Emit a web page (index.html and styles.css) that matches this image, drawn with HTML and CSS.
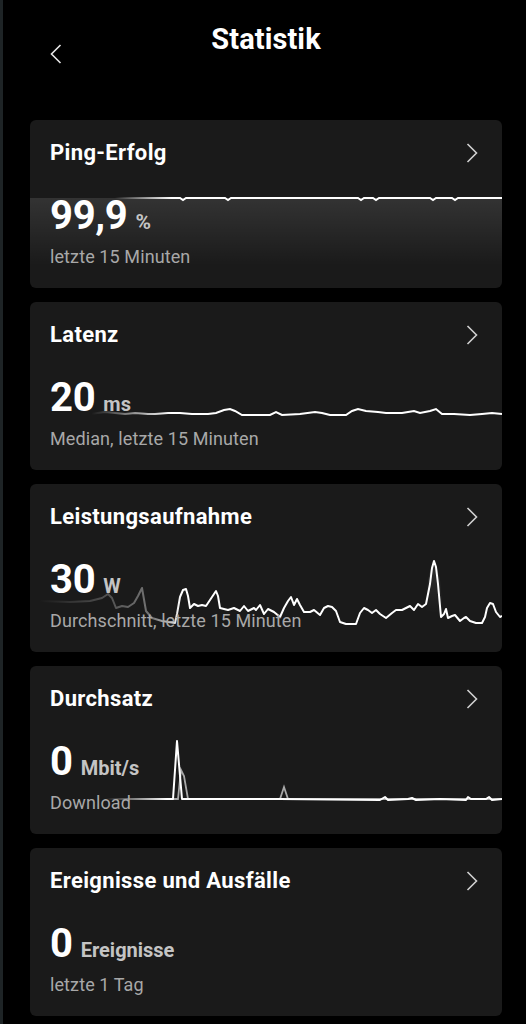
FILE: index.html
```html
<!DOCTYPE html>
<html lang="de">
<head>
<meta charset="utf-8">
<title>Statistik</title>
<link rel="stylesheet" href="styles.css">
</head>
<body>
<div class="screen">
  <header class="topbar">
    <button class="back" aria-label="Zurück">
      <svg width="12" height="20" viewBox="0 0 12 20"><polyline points="10.5,1 1.5,10 10.5,19" fill="none" stroke="#e6e6e6" stroke-width="1.6"/></svg>
    </button>
    <h1 class="title">Statistik</h1>
    <span class="spacer"></span>
  </header>

  <main class="cards">
    <!-- Ping -->
    <section class="card">
      <svg class="chart" viewBox="0 0 472 168" preserveAspectRatio="none">
        <defs>
          <linearGradient id="g1s" gradientUnits="userSpaceOnUse" x1="0" y1="0" x2="472" y2="0">
            <stop offset="0.18" stop-color="#fff" stop-opacity="0"/>
            <stop offset="0.30" stop-color="#fff" stop-opacity="1"/>
          </linearGradient>
          <linearGradient id="g1f" x1="0" y1="0" x2="0" y2="1">
            <stop offset="0" stop-color="#fff" stop-opacity="0.11"/>
            <stop offset="0.75" stop-color="#fff" stop-opacity="0"/>
          </linearGradient>
        </defs>
        <path d="M0,78 L472,78 L472,168 L0,168 Z" fill="url(#g1f)"/>
        <polyline fill="none" stroke="url(#g1s)" stroke-width="2" points="0,78 150,78 153,80 156,78 195,78 198,80 201,78 328,78 331,80 334,78 343,78 346,80 349,78 400,78 403,80 406,78 422,78 425,80 428,78 472,78"/>
      </svg>
      <div class="card-head">
        <h2>Ping-Erfolg</h2>
        <svg class="chev" width="12" height="20" viewBox="0 0 12 20"><polyline points="1.5,1 10.5,10 1.5,19" fill="none" stroke="#d0d0d0" stroke-width="1.6"/></svg>
      </div>
      <div class="value"><span class="num">99,9</span><span class="unit unit-pct">%</span></div>
      <p class="sub">letzte 15 Minuten</p>
    </section>

    <!-- Latenz -->
    <section class="card">
      <svg class="chart" viewBox="0 0 472 168" preserveAspectRatio="none">
        <defs>
          <linearGradient id="g2s" gradientUnits="userSpaceOnUse" x1="0" y1="0" x2="472" y2="0">
            <stop offset="0.13" stop-color="#fff" stop-opacity="0"/>
            <stop offset="0.30" stop-color="#fff" stop-opacity="1"/>
          </linearGradient>
        </defs>
        <polyline fill="none" stroke="url(#g2s)" stroke-width="2" points="60,112 75,110 95,112 105,111 118,112 125,112 138,111 150,111 162,112 178,112 186,111 194,108 200,107 205,109 212,113 228,113 240,113 246,110 252,113 270,112 285,110 292,111 300,113 316,113 322,109 328,107 336,109 348,110 356,111 372,111 378,110 384,109 390,111 400,109 406,107 412,112 424,112 440,113 452,112 462,111 472,112"/>
      </svg>
      <div class="card-head">
        <h2>Latenz</h2>
        <svg class="chev" width="12" height="20" viewBox="0 0 12 20"><polyline points="1.5,1 10.5,10 1.5,19" fill="none" stroke="#d0d0d0" stroke-width="1.6"/></svg>
      </div>
      <div class="value"><span class="num">20</span><span class="unit">ms</span></div>
      <p class="sub">Median, letzte 15 Minuten</p>
    </section>

    <!-- Leistungsaufnahme -->
    <section class="card">
      <svg class="chart" viewBox="0 0 472 168" preserveAspectRatio="none">
        <defs>
          <linearGradient id="g3s" gradientUnits="userSpaceOnUse" x1="0" y1="0" x2="472" y2="0">
            <stop offset="0.02" stop-color="#fff" stop-opacity="0"/>
            <stop offset="0.26" stop-color="#fff" stop-opacity="0.4"/>
            <stop offset="0.32" stop-color="#fff" stop-opacity="1"/>
          </linearGradient>
          <linearGradient id="g3f" x1="0" y1="0" x2="0" y2="1">
            <stop offset="0" stop-color="#fff" stop-opacity="0.10"/>
            <stop offset="1" stop-color="#fff" stop-opacity="0"/>
          </linearGradient>
        </defs>
        <path d="M396,126 L398,96 L401,84 L404,77 L407,84 L410,96 L413,130 Z" fill="url(#g3f)"/>
        <polyline fill="none" stroke="url(#g3s)" stroke-width="2" stroke-linejoin="round" points="10,117 40,118 60,117 72,114 78,110 82,114 86,124 92,122 98,123 104,119 108,112 112,104 116,127 122,134 132,137 145,139 147,130 150,113 153,106 156,105 158,112 160,124 164,120 168,122 172,121 176,122 180,116 184,110 186,107 188,112 190,124 198,126 204,124 210,127 214,122 218,127 224,124 226,126 230,121 234,130 238,125 244,128 250,133 254,124 258,117 261,113 264,121 267,115 270,121 274,128 280,128 284,126 290,131 294,124 298,122 302,123 306,127 310,138 316,140 326,140 330,129 334,124 338,126 342,129 346,126 350,130 356,134 362,129 366,126 372,126 376,124 380,122 384,126 388,120 392,123 396,120 400,100 402,84 404,77 406,83 408,100 411,133 414,130 416,125 418,134 422,132 425,131 430,137 434,134 436,133 440,137 446,139 452,139 455,133 457,124 460,119 463,120 466,128 470,133 472,132"/>
      </svg>
      <div class="card-head">
        <h2>Leistungsaufnahme</h2>
        <svg class="chev" width="12" height="20" viewBox="0 0 12 20"><polyline points="1.5,1 10.5,10 1.5,19" fill="none" stroke="#d0d0d0" stroke-width="1.6"/></svg>
      </div>
      <div class="value"><span class="num">30</span><span class="unit">W</span></div>
      <p class="sub">Durchschnitt, letzte 15 Minuten</p>
    </section>

    <!-- Durchsatz -->
    <section class="card">
      <svg class="chart" viewBox="0 0 472 168" preserveAspectRatio="none">
        <defs>
          <linearGradient id="g4s" gradientUnits="userSpaceOnUse" x1="0" y1="0" x2="472" y2="0">
            <stop offset="0.16" stop-color="#fff" stop-opacity="0"/>
            <stop offset="0.29" stop-color="#fff" stop-opacity="1"/>
          </linearGradient>
        </defs>
        <polyline fill="none" stroke="#a8a8a8" stroke-width="1.8" points="140,133 148,133 151,104 154,110 158,133 250,133 254,121 258,133 472,133"/>
        <polyline fill="none" stroke="url(#g4s)" stroke-width="2" stroke-linejoin="round" points="70,133 141,133 143,133 147,75 152,133 210,133 250,133 350,134 355,131 358,134 378,133 382,132 386,134 410,133 436,134 438,131 441,133 456,133 459,131 462,134 472,133"/>
      </svg>
      <div class="card-head">
        <h2>Durchsatz</h2>
        <svg class="chev" width="12" height="20" viewBox="0 0 12 20"><polyline points="1.5,1 10.5,10 1.5,19" fill="none" stroke="#d0d0d0" stroke-width="1.6"/></svg>
      </div>
      <div class="value"><span class="num">0</span><span class="unit">Mbit/s</span></div>
      <p class="sub">Download</p>
    </section>

    <!-- Ereignisse -->
    <section class="card">
      <div class="card-head">
        <h2>Ereignisse und Ausfälle</h2>
        <svg class="chev" width="12" height="20" viewBox="0 0 12 20"><polyline points="1.5,1 10.5,10 1.5,19" fill="none" stroke="#d0d0d0" stroke-width="1.6"/></svg>
      </div>
      <div class="value"><span class="num">0</span><span class="unit">Ereignisse</span></div>
      <p class="sub">letzte 1 Tag</p>
    </section>
  </main>
</div>
</body>
</html>
```

FILE: styles.css
```css
* { box-sizing: border-box; }

html, body {
  margin: 0;
  padding: 0;
  background: #000;
}

body {
  font-family: Roboto, "Liberation Sans", sans-serif;
  color: #fff;
}

.screen {
  min-height: 1024px;
  border-left: 3px solid #1e2426;
  padding: 0 24px 0 27px;
}

.topbar {
  display: grid;
  grid-template-columns: 1fr auto 1fr;
  align-items: start;
  height: 120px;
  padding-top: 22px;
}

.back {
  justify-self: start;
  margin: 22px 0 0 20px;
  padding: 0;
  border: 0;
  background: none;
  display: flex;
}

.title {
  margin: 0;
  font-size: 29px;
  line-height: 34px;
  font-weight: 700;
  letter-spacing: 0.1px;
}

.cards {
  display: flex;
  flex-direction: column;
  gap: 14px;
}

.card {
  position: relative;
  height: 168px;
  background: #1a1a1a;
  border-radius: 6px;
  padding: 20px 24px 0 20px;
  overflow: hidden;
}

.chart {
  position: absolute;
  inset: 0;
  width: 100%;
  height: 100%;
}

.card-head, .value, .sub {
  position: relative;
}

.card-head {
  display: flex;
  justify-content: space-between;
  align-items: center;
  height: 26px;
}

.card-head h2 {
  margin: 0;
  font-size: 22px;
  line-height: 26px;
  font-weight: 700;
  letter-spacing: 0.35px;
}

.chev {
  display: block;
  margin-top: -1px;
}

.value {
  display: flex;
  align-items: baseline;
  gap: 8px;
  margin-top: 28px;
  height: 44px;
}

.num {
  font-size: 40px;
  line-height: 44px;
  font-weight: 700;
  letter-spacing: -0.3px;
}

.unit {
  font-size: 20px;
  font-weight: 700;
  color: #c4c4c4;
}

.unit-pct {
  font-size: 21px;
}

.sub {
  margin: 9px 0 0;
  font-size: 18px;
  line-height: 20px;
  letter-spacing: 0.1px;
  color: #a8a8a8;
}
```
